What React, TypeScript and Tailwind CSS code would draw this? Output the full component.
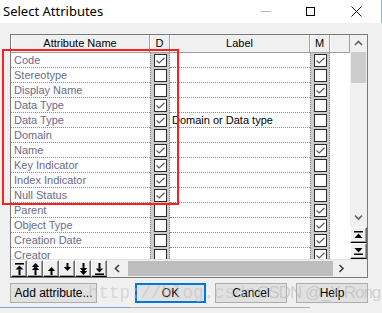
import type { ReactNode } from "react";

type Row = { name: string; d: boolean; label?: string; m: boolean };

const rows: Row[] = [
  { name: "Code", d: true, m: true },
  { name: "Stereotype", d: false, m: false },
  { name: "Display Name", d: false, m: true },
  { name: "Data Type", d: true, m: false },
  { name: "Data Type", d: true, label: "Domain or Data type", m: false },
  { name: "Domain", d: false, m: false },
  { name: "Name", d: true, m: true },
  { name: "Key Indicator", d: true, m: false },
  { name: "Index Indicator", d: true, m: false },
  { name: "Null Status", d: true, m: false },
  { name: "Parent", d: false, m: true },
  { name: "Object Type", d: false, m: true },
  { name: "Creation Date", d: false, m: true },
  { name: "Creator", d: false, m: true },
];

function Check({ on }: { on: boolean }) {
  return (
    <div className="w-[13px] h-[13px] border border-[#2b2b2b] bg-white flex items-center justify-center">
      {on && (
        <svg width="11" height="11" viewBox="0 0 11 11">
          <path d="M1.5 5.5 L4.2 8 L9.5 2.8" fill="none" stroke="#5a5a5a" strokeWidth="1.2" />
        </svg>
      )}
    </div>
  );
}

function CheckCell({ on }: { on: boolean }) {
  return (
    <div className="w-[20px] h-full flex items-center justify-center bg-[#cbcbcb] border-x border-dotted border-[#8c8c8c]">
      <Check on={on} />
    </div>
  );
}

function HeadCell({ w, children }: { w: string; children?: ReactNode }) {
  return (
    <div className={`${w} h-full flex items-center justify-center border-r border-r-[#a0a0a0] shadow-[inset_1px_0_0_#ffffff]`}>
      {children}
    </div>
  );
}

function RaisedBtn({ w, children }: { w: string; children: ReactNode }) {
  return (
    <div className={`${w} h-full flex items-center justify-center bg-[#f0f0f0] border border-t-white border-l-white border-r-[#696969] border-b-[#000000] shadow-[inset_-1px_-1px_0_#a0a0a0]`}>
      {children}
    </div>
  );
}

const arrowIcons = [
  <svg key="a" width="9" height="12" viewBox="0 0 9 12"><rect x="0" y="0" width="9" height="1.6" /><polygon points="4.5,2.4 0.5,6.5 8.5,6.5" /><rect x="3.5" y="6.5" width="2" height="5.5" /></svg>,
  <svg key="b" width="9" height="12" viewBox="0 0 9 12"><polygon points="4.5,0 0.8,4 8.2,4" /><polygon points="4.5,3 0.8,7 8.2,7" /><rect x="3.5" y="7" width="2" height="5" /></svg>,
  <svg key="c" width="9" height="12" viewBox="0 0 9 12"><polygon points="4.5,4 0.8,8 8.2,8" /><rect x="3.5" y="8" width="2" height="4" /></svg>,
  <svg key="d" width="9" height="12" viewBox="0 0 9 12"><rect x="3.5" y="0" width="2" height="4" /><polygon points="0.8,4 8.2,4 4.5,8" /></svg>,
  <svg key="e" width="9" height="12" viewBox="0 0 9 12"><rect x="3.5" y="0" width="2" height="5" /><polygon points="0.8,5 8.2,5 4.5,9" /><polygon points="0.8,8 8.2,8 4.5,12" /></svg>,
  <svg key="f" width="9" height="12" viewBox="0 0 9 12"><rect x="3.5" y="0" width="2" height="5.5" /><polygon points="0.8,5.5 8.2,5.5 4.5,9.6" /><rect x="0" y="10.4" width="9" height="1.6" /></svg>,
];

function Chevron({ dir, color = "#606060" }: { dir: "up" | "down" | "left" | "right"; color?: string }) {
  const d = {
    up: "M1 6 L4.5 2.5 L8 6",
    down: "M1 2.5 L4.5 6 L8 2.5",
    left: "M6 1 L2.5 4.5 L6 8",
    right: "M2.5 1 L6 4.5 L2.5 8",
  }[dir];
  return (
    <svg width="9" height="9" viewBox="0 0 9 9">
      <path d={d} fill="none" stroke={color} strokeWidth="1.6" />
    </svg>
  );
}

export default function App() {
  return (
    <div className="relative w-[382px] h-[313px] overflow-hidden bg-[#f0f0f0] font-['Liberation_Sans',Arial,sans-serif] text-[11px] text-black">
      {/* Title bar */}
      <div className="h-[23px] bg-white flex items-center border-r border-r-[#8fb3e0]">
        <span className="pl-[3px] text-[13px] font-['Noto_Sans',sans-serif] text-black leading-none">Select Attributes</span>
        <div className="ml-auto flex items-center h-full">
          <div className="w-[10px] h-px bg-[#b5b5b5] mr-[35px]" />
          <div className="w-[9px] h-[9px] border border-black mr-[36px]" />
          <svg width="11" height="11" viewBox="0 0 11 11" className="mr-[19px]">
            <path d="M0.5 0.5 L10.5 10.5 M10.5 0.5 L0.5 10.5" stroke="#111" strokeWidth="1" />
          </svg>
        </div>
      </div>

      <div className="pt-[11px] pl-[10px]">
        {/* Grid */}
        <div className="w-[358px] h-[244px] border border-[#7a7a7a] bg-white flex flex-col">
          <div className="h-[224px] flex">
            <div className="w-[339px] flex flex-col overflow-hidden">
              <div className="h-[18px] shrink-0 flex bg-[#f0f0f0] border-b border-b-[#a0a0a0]">
                <HeadCell w="w-[139px]">Attribute Name</HeadCell>
                <HeadCell w="w-[20px]">D</HeadCell>
                <HeadCell w="w-[140px]">Label</HeadCell>
                <HeadCell w="w-[20px]">M</HeadCell>
                <HeadCell w="w-[20px]" />
              </div>
              {rows.map((r, i) => (
                <div key={i} className="h-[15px] shrink-0 flex">
                  <div className="w-[139px] h-full border-b border-dotted border-[#8c8c8c] pl-[3px] leading-[14px] text-[#6b6b88] whitespace-nowrap">
                    {r.name}
                  </div>
                  <CheckCell on={r.d} />
                  <div className="w-[140px] h-full border-b border-dotted border-[#8c8c8c] pl-[2px] leading-[14px] whitespace-nowrap">
                    {r.label ?? ""}
                  </div>
                  <CheckCell on={r.m} />
                  <div className="w-[20px] h-full" />
                </div>
              ))}
            </div>

            {/* Vertical scrollbar */}
            <div className="w-[17px] bg-[#f0f0f0] flex flex-col">
              <div className="h-[17px] flex items-center justify-center">
                <Chevron dir="up" />
              </div>
              <div className="h-[31px] mx-[1px] bg-[#cdcdcd]" />
              <div className="flex-1" />
              <div className="h-[17px] flex items-center justify-center">
                <Chevron dir="down" />
              </div>
              <div className="h-[1px]" />
              <RaisedBtn w="w-[17px] !h-[16px]">
                <svg width="9" height="8" viewBox="0 0 9 8"><rect x="0" y="0" width="9" height="1.5" /><polygon points="4.5,2.5 0.5,7 8.5,7" /></svg>
              </RaisedBtn>
              <RaisedBtn w="w-[17px] !h-[16px]">
                <svg width="9" height="8" viewBox="0 0 9 8"><polygon points="0.5,1 8.5,1 4.5,5.5" /><rect x="0" y="6.5" width="9" height="1.5" /></svg>
              </RaisedBtn>
            </div>
          </div>

          {/* Bottom toolbar + horizontal scrollbar */}
          <div className="h-[18px] flex border-t border-t-[#e0e0e0]">
            <div className="flex h-full">
              {arrowIcons.map((ic, i) => (
                <RaisedBtn key={i} w="w-[16px]">{ic}</RaisedBtn>
              ))}
            </div>
            <div className="flex-1 flex bg-[#f0f0f0]">
              <div className="w-[21px] flex items-center justify-center">
                <Chevron dir="left" color="#404040" />
              </div>
              <div className="flex-1 my-[1px] bg-[#bdbdbd]" />
              <div className="w-[17px] flex items-center justify-center">
                <Chevron dir="right" color="#404040" />
              </div>
              <div className="w-[17px]" />
            </div>
          </div>
        </div>

        {/* Dialog buttons */}
        <div className="flex mt-[5px] h-[20px] items-stretch">
          <div className="w-[87px] bg-[#e1e1e1] border border-[#adadad] flex items-center justify-center text-[12px]">Add attribute...</div>
          <div className="w-[71px] ml-[38px] bg-[#e1e1e1] border-2 border-[#0078d7] flex items-center justify-center text-[12px]">OK</div>
          <div className="w-[72px] ml-[9px] bg-[#e1e1e1] border border-[#adadad] flex items-center justify-center text-[12px]">Cancel</div>
          <div className="w-[72px] ml-[9px] bg-[#e1e1e1] border border-[#adadad] flex items-center justify-center text-[12px]">Help</div>
        </div>
      </div>

      <div className="absolute left-0 top-[307px] w-[130px] h-px bg-[#7aa4d8]" />
      <div className="absolute left-[130px] top-[307px] w-[180px] h-px bg-[#b0b0b0]" />

      {/* Watermarks */}
      <div className="absolute left-[88px] top-[282px] text-[17.5px] leading-[22px] font-['Liberation_Mono',monospace] text-[#bcbcbc]/50 whitespace-nowrap pointer-events-none">
        http://blog.csdn
      </div>
      <div className="absolute left-[257px] top-[282px] text-[17px] leading-[22px] tracking-[-1px] font-['Liberation_Sans',sans-serif] text-[#b0b0b0]/50 whitespace-nowrap pointer-events-none">
        CSDN @_X.Rong
      </div>

      {/* Red highlight */}
      <div className="absolute left-[2px] top-[49px] w-[177px] h-[156px] border-2 border-[#ff1f1f] pointer-events-none" />
    </div>
  );
}
